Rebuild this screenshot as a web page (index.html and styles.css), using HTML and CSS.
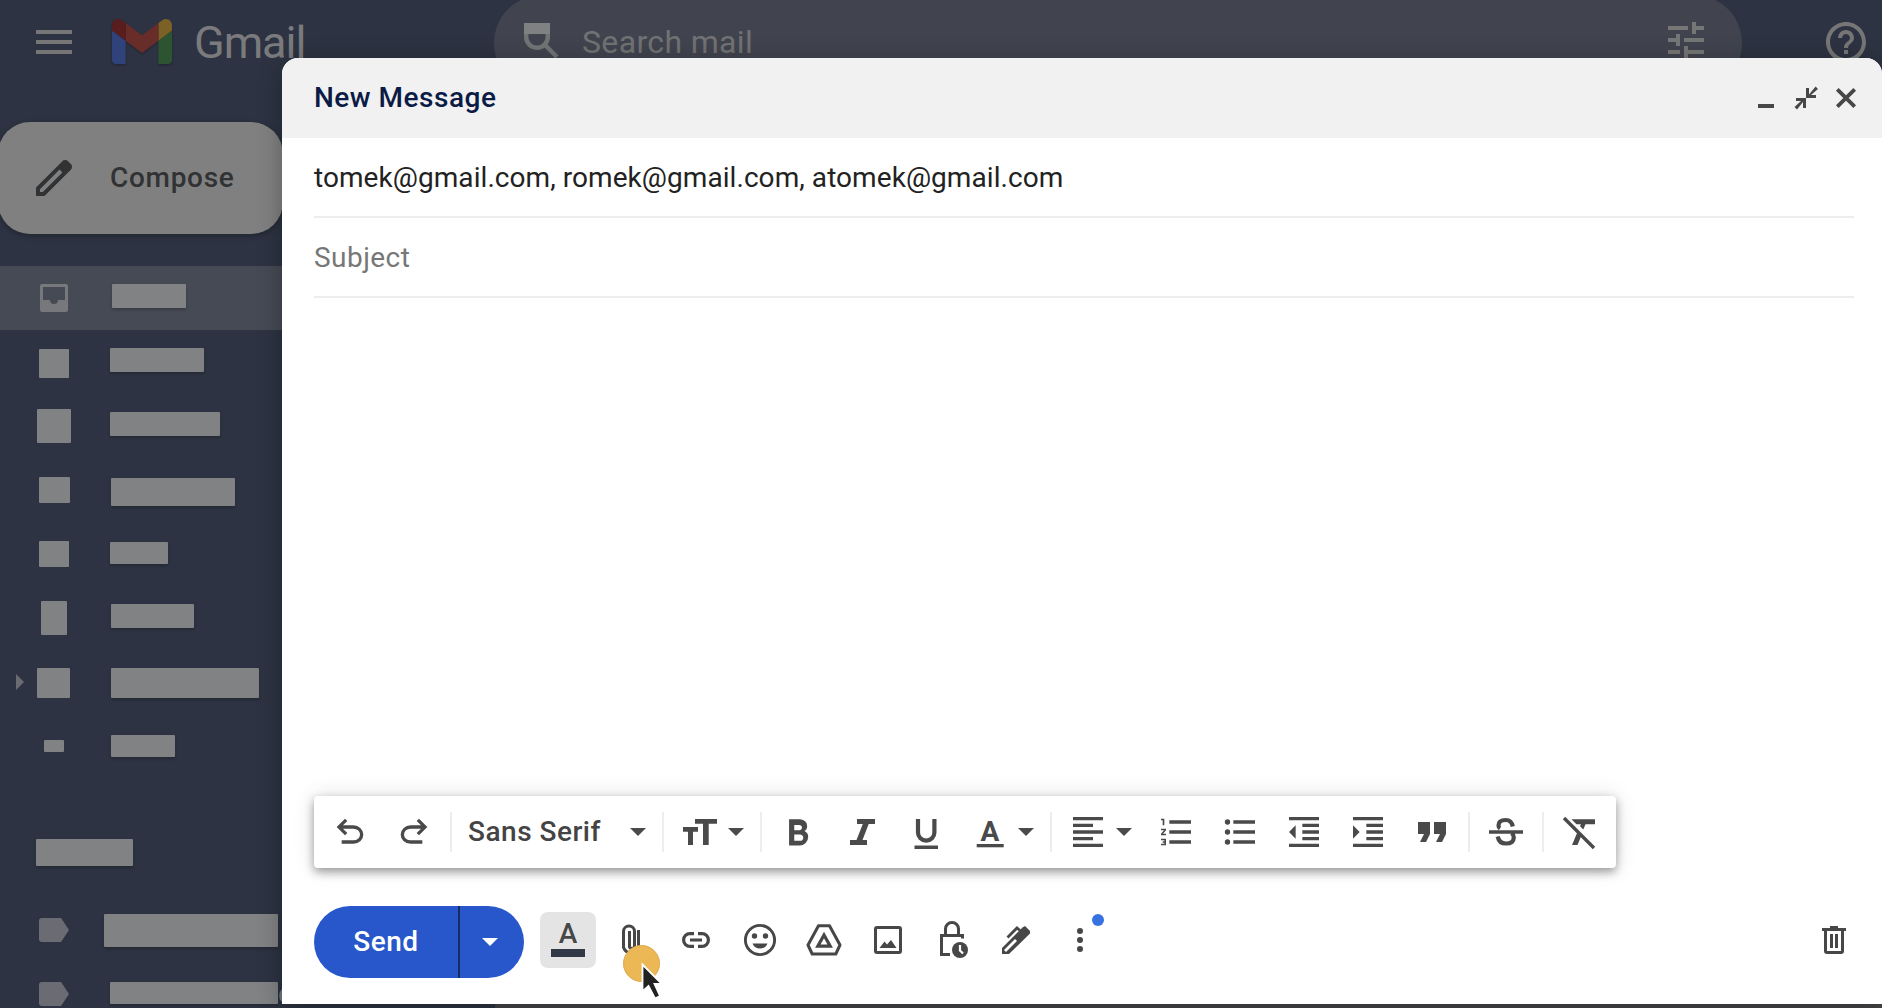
FILE: index.html
```html
<!DOCTYPE html>
<html lang="en">
<head>
<meta charset="utf-8">
<title>Gmail - New Message</title>
<link rel="stylesheet" href="styles.css">
</head>
<body>
<div class="app">
  <header class="topbar">
    <svg class="menu" viewBox="0 0 36 24"><path d="M0 0h36v4H0zM0 10h36v4H0zM0 20h36v4H0z"/></svg>
    <svg class="logo" viewBox="52 42 88 66"><path fill="#30427a" d="M58 108h14V74L52 59v43c0 3.32 2.69 6 6 6"/><path fill="#2d5430" d="M120 108h14c3.32 0 6-2.69 6-6V59l-20 15"/><path fill="#7b6126" d="M120 48v26l20-15v-8c0-7.42-8.47-11.65-14.4-7.2"/><path fill="#682d29" d="M72 74V48l24 18 24-18v26L96 92"/><path fill="#591d1e" d="M52 51v8l20 15V48l-5.6-4.2c-5.94-4.45-14.4-.22-14.4 7.2"/></svg>
    <span class="brand">Gmail</span>
    <div class="search">
      <svg class="search-icon" viewBox="0 0 40 40"><path fill="#808182" d="M2 3h26v11H2z"/><path fill="none" stroke="#737475" stroke-width="4.4" d="M4.200 14v3a10.800 10.800 0 0 0 21.600 0v-3M22.500 24.500 35 37"/></svg>
      <span class="search-text">Search mail</span>
      <svg class="tune" viewBox="0 0 36 36"><path d="M0 4h20v4H0zM24 0h4v4h8v4h-8v4h-4zM0 16h8v-4h4v12H8v-4H0zM16 16h20v4H16zM0 28h12v4H0zM16 24h4v4h16v4H20v4h-4z"/></svg>
    </div>
    <svg class="help" viewBox="0 0 24 24"><path d="M11 18h2v-2h-2v2zm1-16C6.480 2 2 6.480 2 12s4.480 10 10 10 10-4.480 10-10S17.520 2 12 2zm0 18c-4.410 0-8-3.590-8-8s3.590-8 8-8 8 3.590 8 8-3.590 8-8 8zm0-14c-2.210 0-4 1.790-4 4h2c0-1.100.9-2 2-2s2 .9 2 2c0 2-3 1.750-3 5h2c0-2.250 3-2.500 3-5 0-2.210-1.790-4-4-4z"/></svg>
  </header>
  <div class="body">
    <nav class="sidebar">
      <div class="compose-btn">
        <svg class="pencil" viewBox="0 -960 960 960"><path d="M200-200h57l391-391-57-57-391 391v57Zm-80 80v-170l528-527q12-11 26.500-17t30.500-6q16 0 31 6t26 18l55 56q12 11 17.500 26t5.500 30q0 16-5.500 30.500T817-647L290-120H120Z"/></svg>
        <span>Compose</span>
      </div>
      <div class="row active"><span class="ic"><svg class="inbox" viewBox="0 0 28 28"><path fill-rule="evenodd" d="M2 0h24a2 2 0 0 1 2 2v24a2 2 0 0 1-2 2H2a2 2 0 0 1-2-2V2a2 2 0 0 1 2-2zM3 3v13h7a4 4 0 0 0 8 0h7V3z"/></svg></span><i class="bar b1"></i></div>
      <div class="row"><span class="ic"><i class="sq s2"></i></span><i class="bar b2"></i></div>
      <div class="row"><span class="ic"><i class="sq s3"></i></span><i class="bar b3"></i></div>
      <div class="row"><span class="ic"><i class="sq s4"></i></span><i class="bar b4"></i></div>
      <div class="row"><span class="ic"><i class="sq s5"></i></span><i class="bar b5"></i></div>
      <div class="row"><span class="ic"><i class="sq s6"></i></span><i class="bar b6"></i></div>
      <div class="row"><svg class="expand" viewBox="0 0 8 16"><path d="M0 0l8 8-8 8z"/></svg><span class="ic"><i class="sq s7"></i></span><i class="bar b7"></i></div>
      <div class="row"><span class="ic"><i class="sq s8"></i></span><i class="bar b8"></i></div>
      <div class="heading"><i class="bar"></i></div>
      <div class="row"><span class="ic"><svg class="tag" viewBox="0 0 30 24"><path d="M3 0h19l8 12-8 12H3a3 3 0 0 1-3-3V3a3 3 0 0 1 3-3z"/></svg></span><i class="bar b9"></i></div>
      <div class="row"><span class="ic"><svg class="tag" viewBox="0 0 30 24"><path d="M3 0h19l8 12-8 12H3a3 3 0 0 1-3-3V3a3 3 0 0 1 3-3z"/></svg></span><i class="bar b10"></i><span class="peek">e</span></div>
    </nav>
    <main class="list"></main>
  </div>
</div>

<section class="dialog">
  <div class="title">
    <h1>New Message</h1>
    <svg class="win" viewBox="0 0 40 40"><path d="M12 26h16v4H12z"/></svg>
    <svg class="win" viewBox="0 0 40 40"><path d="M20 10h3v6.500L29.600 8.500 32 11 25 17h5v3H20zM10 20h10v10h-3v-6L11 31.500 8.500 29 15 23h-5z"/></svg>
    <svg class="win" viewBox="0 0 40 40"><path fill="none" stroke="#474747" stroke-width="3.800" d="M11.300 11.300 28.700 28.700M28.700 11.300 11.300 28.700"/></svg>
  </div>
  <div class="field to">tomek@gmail.com, romek@gmail.com, atomek@gmail.com</div>
  <div class="field subject">Subject</div>
  <div class="message"></div>

  <div class="format">
    <svg class="btn" viewBox="0 -960 960 960"><path d="M280-200v-80h284q63 0 109.500-40T720-420q0-60-46.500-100T564-560H312l104 104-56 56-200-200 200-200 56 56-104 104h252q97 0 163.500 63T800-420q0 94-66.500 157T564-200H280Z"/></svg>
    <svg class="btn" viewBox="0 -960 960 960"><path transform="translate(960 0) scale(-1 1)" d="M280-200v-80h284q63 0 109.500-40T720-420q0-60-46.500-100T564-560H312l104 104-56 56-200-200 200-200 56 56-104 104h252q97 0 163.500 63T800-420q0 94-66.500 157T564-200H280Z"/></svg>
    <i class="sep"></i>
    <div class="font"><span>Sans Serif</span><svg class="caret" viewBox="0 0 16 8"><path d="M0 0h16L8 8z"/></svg></div>
    <i class="sep"></i>
    <svg class="btn" viewBox="0 0 40 40"><path d="M15 7h22v4.700h-8.300V33H23V11.700h-8zM3 15h15v4.700h-5V33H8V19.700H3z"/></svg><svg class="caret drop" viewBox="0 0 16 8"><path d="M0 0h16L8 8z"/></svg>
    <i class="sep"></i>
    <svg class="btn" viewBox="0 -960 960 960"><path transform="translate(26 6)" d="M240-160v-630h250q72 0 128 42t56 119q0 51-23 80t-43 38q25 11 58 44t33 97q0 92-66 151T500-160H240Zm124-114h134q40 0 61-22t21-54q0-32-22-53t-64-21H364v150Zm0-256h116q33 0 51-19t18-43q0-26-18-43t-48-17H364v122Z"/></svg>
    <svg class="btn" viewBox="0 0 40 40"><path d="M15 7h18v5h-6.300L20.500 28H25v5H8v-5h6.500l6.300-16H15z"/></svg>
    <svg class="btn" viewBox="0 0 40 40"><path d="M8.500 33.500h23.500v3.500H8.500z"/><path fill="none" stroke="#4a4a4a" stroke-width="4.200" d="M12 7v13.500a8.200 8.200 0 0 0 16.400 0V7"/></svg>
    <svg class="btn" viewBox="0 0 40 40"><path d="M6.700 32h27v3.300h-27z"/><text x="20" y="29" text-anchor="middle" font-size="28" font-weight="700">A</text></svg><svg class="caret drop" viewBox="0 0 16 8"><path d="M0 0h16L8 8z"/></svg>
    <i class="sep"></i>
    <svg class="btn" viewBox="0 0 24 24"><path d="M3 3h18v2H3zM3 7h12v2H3zM3 11h18v2H3zM3 15h12v2H3zM3 19h18v2H3z"/></svg><svg class="caret drop" viewBox="0 0 16 8"><path d="M0 0h16L8 8z"/></svg>
    <svg class="btn" viewBox="0 0 24 24"><path d="M8 5h13v2H8zM8 11h13v2H8zM8 17h13v2H8z"/><path transform="translate(1 0)" d="M2 17h2v.5H3v1h1v.5H2v1h3v-4H2v1zm1-9h1V4H2v1h1v3zm-1 3h1.800L2 13.100v.9h3v-1H3.200L5 10.900V10H2v1z"/></svg>
    <svg class="btn" viewBox="0 0 24 24"><path d="M8 5h13v2H8zM8 11h13v2H8zM8 17h13v2H8z"/><circle cx="4.500" cy="6" r="1.600"/><circle cx="4.500" cy="12" r="1.600"/><circle cx="4.500" cy="18" r="1.600"/></svg>
    <svg class="btn" viewBox="0 0 24 24"><path d="M11 17h10v-2H11v2zm-8-5l4 4V8l-4 4zm0 9h18v-2H3v2zM3 3v2h18V3H3zm8 6h10V7H11v2zm0 4h10v-2H11v2z"/></svg>
    <svg class="btn" viewBox="0 0 24 24"><path d="M3 21h18v-2H3v2zM3 8v8l4-4-4-4zm8 9h10v-2H11v2zM3 3v2h18V3H3zm8 6h10V7H11v2zm0 4h10v-2H11v2z"/></svg>
    <svg class="btn" viewBox="0 0 40 40"><path d="M6 10h12v12l-4 8H8l4-8H6zM22 10h12v12l-4 8h-6l4-8h-6z"/></svg>
    <i class="sep"></i>
    <svg class="btn" viewBox="0 0 40 40"><path d="M3 18.300h34v3.500H3z"/><path fill="none" stroke="#4a4a4a" stroke-width="4.200" d="M26.800 14.500Q25.500 8 19.700 8q-7.200 0-7.200 5.500 0 2 1.500 3M11.700 24.500q1.300 7 8.300 7 7.800 0 7.800-6 0-2.500-2-4.500"/></svg>
    <i class="sep"></i>
    <svg class="btn" viewBox="0 0 40 40"><path d="M11.500 7.300H35v4.900h-9.500L23.300 17.500l-3.300-3.300.9-2h-4.500zM17.300 20.500l3.800 3.800L17.500 33H12z"/><path fill="none" stroke="#4a4a4a" stroke-width="3.400" d="M4 6 34 36"/></svg>
  </div>

  <div class="actions">
    <div class="send"><span class="send-label">Send</span><span class="send-more"><svg class="caret" viewBox="0 0 16 8"><path d="M0 0h16L8 8z"/></svg></span></div>
    <div class="fmt-toggle"><span>A</span><i></i></div>
    <svg class="btn ln" viewBox="0 0 40 40"><path stroke-width="3" d="M17.500 11v16.500M26.500 10v17.500a8 8 0 0 1-15 0V11.500a5.500 5.500 0 0 1 11 0V26a2.500 2.500 0 0 1-5 0V11"/></svg>
    <svg class="btn ln" viewBox="0 0 40 40"><path stroke-width="3.200" d="M18 13.600h-4a6.400 6.400 0 0 0 0 12.800h4M22 13.600h4a6.400 6.400 0 0 1 0 12.800h-4M14 20h12"/></svg>
    <svg class="btn ln" viewBox="0 0 40 40"><circle cx="20" cy="20" r="14.600" stroke-width="2.900"/><g fill="#474747" stroke="none"><circle cx="14.500" cy="16" r="2.700"/><circle cx="25.500" cy="16" r="2.700"/><path d="M12.500 23.500h15q-2 5-7.500 5t-7.500-5z"/></g></svg>
    <svg class="btn ln" viewBox="0 0 40 40"><path stroke-width="3" stroke-linejoin="round" d="M14.500 5.700h11L36 25l-4.200 9H8.200L4 25z"/><path stroke-width="3.200" d="M20 15 26.200 26.200H13.800z"/></svg>
    <svg class="btn ln" viewBox="0 0 40 40"><rect x="7.500" y="7.500" width="25" height="25" rx="1.500" stroke-width="3"/><path fill="#474747" stroke="none" d="M11.500 28l5-6.500 2.500 3 4-4.500 5.500 8z"/></svg>
    <svg class="btn ln" viewBox="0 0 40 40"><path stroke-width="3" d="M13.500 14.500V9a6.500 6.500 0 0 1 13 0v5.500M30.500 18.500v-3h-21v19H18"/><circle cx="28" cy="30" r="8" fill="#474747" stroke="none"/><path stroke="#fff" stroke-width="2.200" d="M28 25v5.500l3 3"/></svg>
    <svg class="btn ln" viewBox="0 0 40 40"><path fill="#474747" stroke="none" d="M6 34v-6L26.500 7.500 29 6l5 5v2.500L13 34z"/><path stroke="#fff" stroke-width="2.800" d="M9 31l11-11"/><path stroke-width="2.800" d="M11.500 17.500l9.500-9.500 3 2.500"/></svg>
    <div class="more"><svg class="btn" viewBox="0 0 40 40"><circle cx="20" cy="11" r="3"/><circle cx="20" cy="20" r="3"/><circle cx="20" cy="29" r="3"/></svg><i class="badge"></i></div>
    <svg class="btn trash" viewBox="0 0 40 40"><path fill-rule="evenodd" d="M16 6h8v2h8v3h-2v20a3 3 0 0 1-3 3H13a3 3 0 0 1-3-3V11H8V8h8zM13 11v20h14V11zM16 14h3v14h-3zM21 14h3v14h-3z"/></svg>
  </div>
</section>

<svg class="pointer" viewBox="0 0 48 60"><circle cx="19.500" cy="19.500" r="18" fill="#ecb755" stroke="#dfa94c"/><path d="M20.500 20.500v27l6-5.500 6.500 12.500 5-2.500-5.500-12h7.500z" fill="#222" stroke="#fff" stroke-width="1.800"/></svg>
</body>
</html>
```

FILE: styles.css
```css
* { box-sizing: border-box; }
body {
  margin: 0;
  position: relative;
  width: 1882px;
  height: 1008px;
  overflow: hidden;
  background: #2d3342;
  font: 28px/36px Roboto, "Liberation Sans", sans-serif;
}
svg { display: block; flex: none; }
i { display: block; flex: none; }

.app { height: 1008px; display: flex; flex-direction: column; overflow: hidden; }
.topbar { height: 90px; flex: none; display: flex; align-items: flex-start; fill: #767676; }
.menu { width: 36px; height: 24px; margin: 30px 0 0 36px; }
.logo { width: 60px; height: 45px; margin: 19px 0 0 40px; filter: drop-shadow(0 1px 1px rgba(0, 0, 0, .3)); }
.brand { width: 322px; flex: none; padding: 18px 0 0 22px; font-size: 45px; line-height: 50px; color: #7b7b7d; letter-spacing: -1px; }
.search {
  width: 1248px; height: 96px; margin-top: -5px; flex: none;
  display: flex; align-items: flex-start;
  padding: 25px 38px 0 28px;
  border-radius: 48px; background: #41444f;
}
.search-icon { width: 40px; height: 40px; }
.search-text { flex: 1; padding-left: 20px; font-size: 32px; line-height: 44px; color: #717273; letter-spacing: .35px; }
.tune { width: 36px; height: 36px; margin-top: 2px; }
.help { width: 48px; height: 48px; margin: 18px 0 0 80px; }

.body { flex: 1; display: flex; }
.sidebar { width: 495px; flex: none; padding-top: 32px; }
.list { flex: 1; background: #454548; }
.compose-btn {
  width: 285px; height: 112px; margin: 0 0 32px -2px; padding-left: 32px;
  display: flex; align-items: center;
  border-radius: 32px; background: #808080; color: #303234; font-weight: 500;
  box-shadow: 0 2px 6px rgba(0, 0, 0, .3);
}
.pencil { width: 48px; height: 48px; margin-right: 32px; fill: #303234; }
.compose-btn span { letter-spacing: .7px; }
.row { position: relative; height: 64px; display: flex; align-items: flex-start; }
.row.active { background: #464a54; }
.ic { width: 108px; height: 64px; flex: none; display: flex; align-items: flex-start; }
.inbox { width: 28px; height: 28px; margin: 18px 0 0 40px; fill: #77787b; }
.sq, .bar { background: #818283; border-radius: 1px; }
.bar { box-shadow: 0 2px 3px rgba(0, 0, 0, .2); }
.b1 { width: 74px; height: 24px; margin: 18px 0 0 4px; }
.s2 { width: 30px; height: 29px; margin: 19px 0 0 39px; }
.b2 { width: 94px; height: 24px; margin: 18px 0 0 2px; }
.s3 { width: 34px; height: 34px; margin: 15px 0 0 37px; }
.b3 { width: 110px; height: 24px; margin: 18px 0 0 2px; }
.s4 { width: 31px; height: 26px; margin: 19px 0 0 39px; }
.b4 { width: 124px; height: 28px; margin: 20px 0 0 3px; }
.s5 { width: 30px; height: 26px; margin: 19px 0 0 39px; }
.b5 { width: 58px; height: 22px; margin: 20px 0 0 2px; }
.s6 { width: 26px; height: 34px; margin: 15px 0 0 41px; }
.b6 { width: 83px; height: 24px; margin: 18px 0 0 3px; }
.s7 { width: 33px; height: 30px; margin: 18px 0 0 13px; }
.b7 { width: 148px; height: 30px; margin: 18px 0 0 3px; }
.s8 { width: 20px; height: 12px; margin: 26px 0 0 44px; }
.b8 { width: 64px; height: 22px; margin: 21px 0 0 3px; }
.expand { width: 8px; height: 16px; margin: 24px 0 0 16px; fill: #6b6c73; }
.expand + .ic { width: 84px; }
.heading { height: 120px; padding: 61px 0 0 36px; }
.heading .bar { width: 97px; height: 27px; }
.tag { width: 30px; height: 24px; margin: 20px 0 0 39px; fill: #6b6c73; }
.b9 { width: 174px; height: 33px; margin: 16px 0 0 -4px; }
.b10 { width: 168px; height: 22px; margin: 20px 0 0 2px; }
.peek { margin-top: 14px; color: #77787b; }

.dialog {
  position: absolute; left: 282px; top: 58px;
  width: 1600px; height: 946px;
  display: flex; flex-direction: column;
  border-radius: 16px 16px 0 0;
  background: #fff;
  box-shadow: 0 4px 24px rgba(0, 0, 0, .3);
}
.title {
  height: 80px; flex: none; padding: 0 16px 0 32px;
  display: flex; align-items: center;
  border-radius: 16px 16px 0 0; background: #f1f1f1; fill: #474747;
}
.title h1 { flex: 1; margin: 0; font-size: 28px; font-weight: 500; color: #0b1b46; letter-spacing: .5px; }
.win { width: 40px; height: 40px; }
.field { height: 80px; flex: none; margin: 0 28px 0 32px; padding-top: 22px; border-bottom: 2px solid #eee; }
.to { color: #222; letter-spacing: .06px; }
.subject { color: #777; letter-spacing: .45px; }
.message { flex: 1; }

.format {
  width: 1302px; height: 72px; flex: none; margin-left: 32px; padding-left: 4px;
  display: flex; align-items: center;
  border-radius: 4px; background: #fff; fill: #4a4a4a;
  box-shadow: 0 4px 10px rgba(0, 0, 0, .36), 0 0 22px rgba(0, 0, 0, .12);
}
.btn { width: 64px; height: 40px; }
.sep { width: 2px; height: 40px; margin: 0 4px; background: #ededed; }
.font { width: 202px; padding: 0 12px; display: flex; align-items: center; justify-content: space-between; color: #444; font-weight: 500; letter-spacing: .5px; }
.caret { width: 16px; height: 8px; }
.drop { margin: 0 12px 0 -4px; }

.actions { height: 136px; flex: none; padding: 38px 16px 0 32px; display: flex; align-items: flex-start; fill: #474747; }
.actions > .btn, .more { margin-top: 14px; }
.send { width: 210px; height: 72px; display: flex; border-radius: 36px; overflow: hidden; background: #2757ca; color: #fff; font-weight: 500; }
.send-label { width: 144px; line-height: 72px; text-align: center; letter-spacing: .5px; }
.send-more { flex: 1; display: flex; align-items: center; justify-content: center; padding-right: 4px; border-left: 2px solid #182c63; fill: #fff; }
.fmt-toggle { width: 56px; height: 56px; margin: 6px 4px 0 16px; border-radius: 8px; background: #e4e4e4; color: #474747; text-align: center; font-weight: 500; line-height: 30px; padding-top: 7px; }
.fmt-toggle i { width: 34px; height: 8px; margin: 0 auto; background: #323847; }
.ln { fill: none; stroke: #474747; }
.more { position: relative; }
.badge { position: absolute; left: 44px; top: -6px; width: 12px; height: 12px; border-radius: 50%; background: #3871e0; }
.trash { margin-left: auto; }
.pointer { position: absolute; left: 622px; top: 944px; width: 48px; height: 60px; }
```
